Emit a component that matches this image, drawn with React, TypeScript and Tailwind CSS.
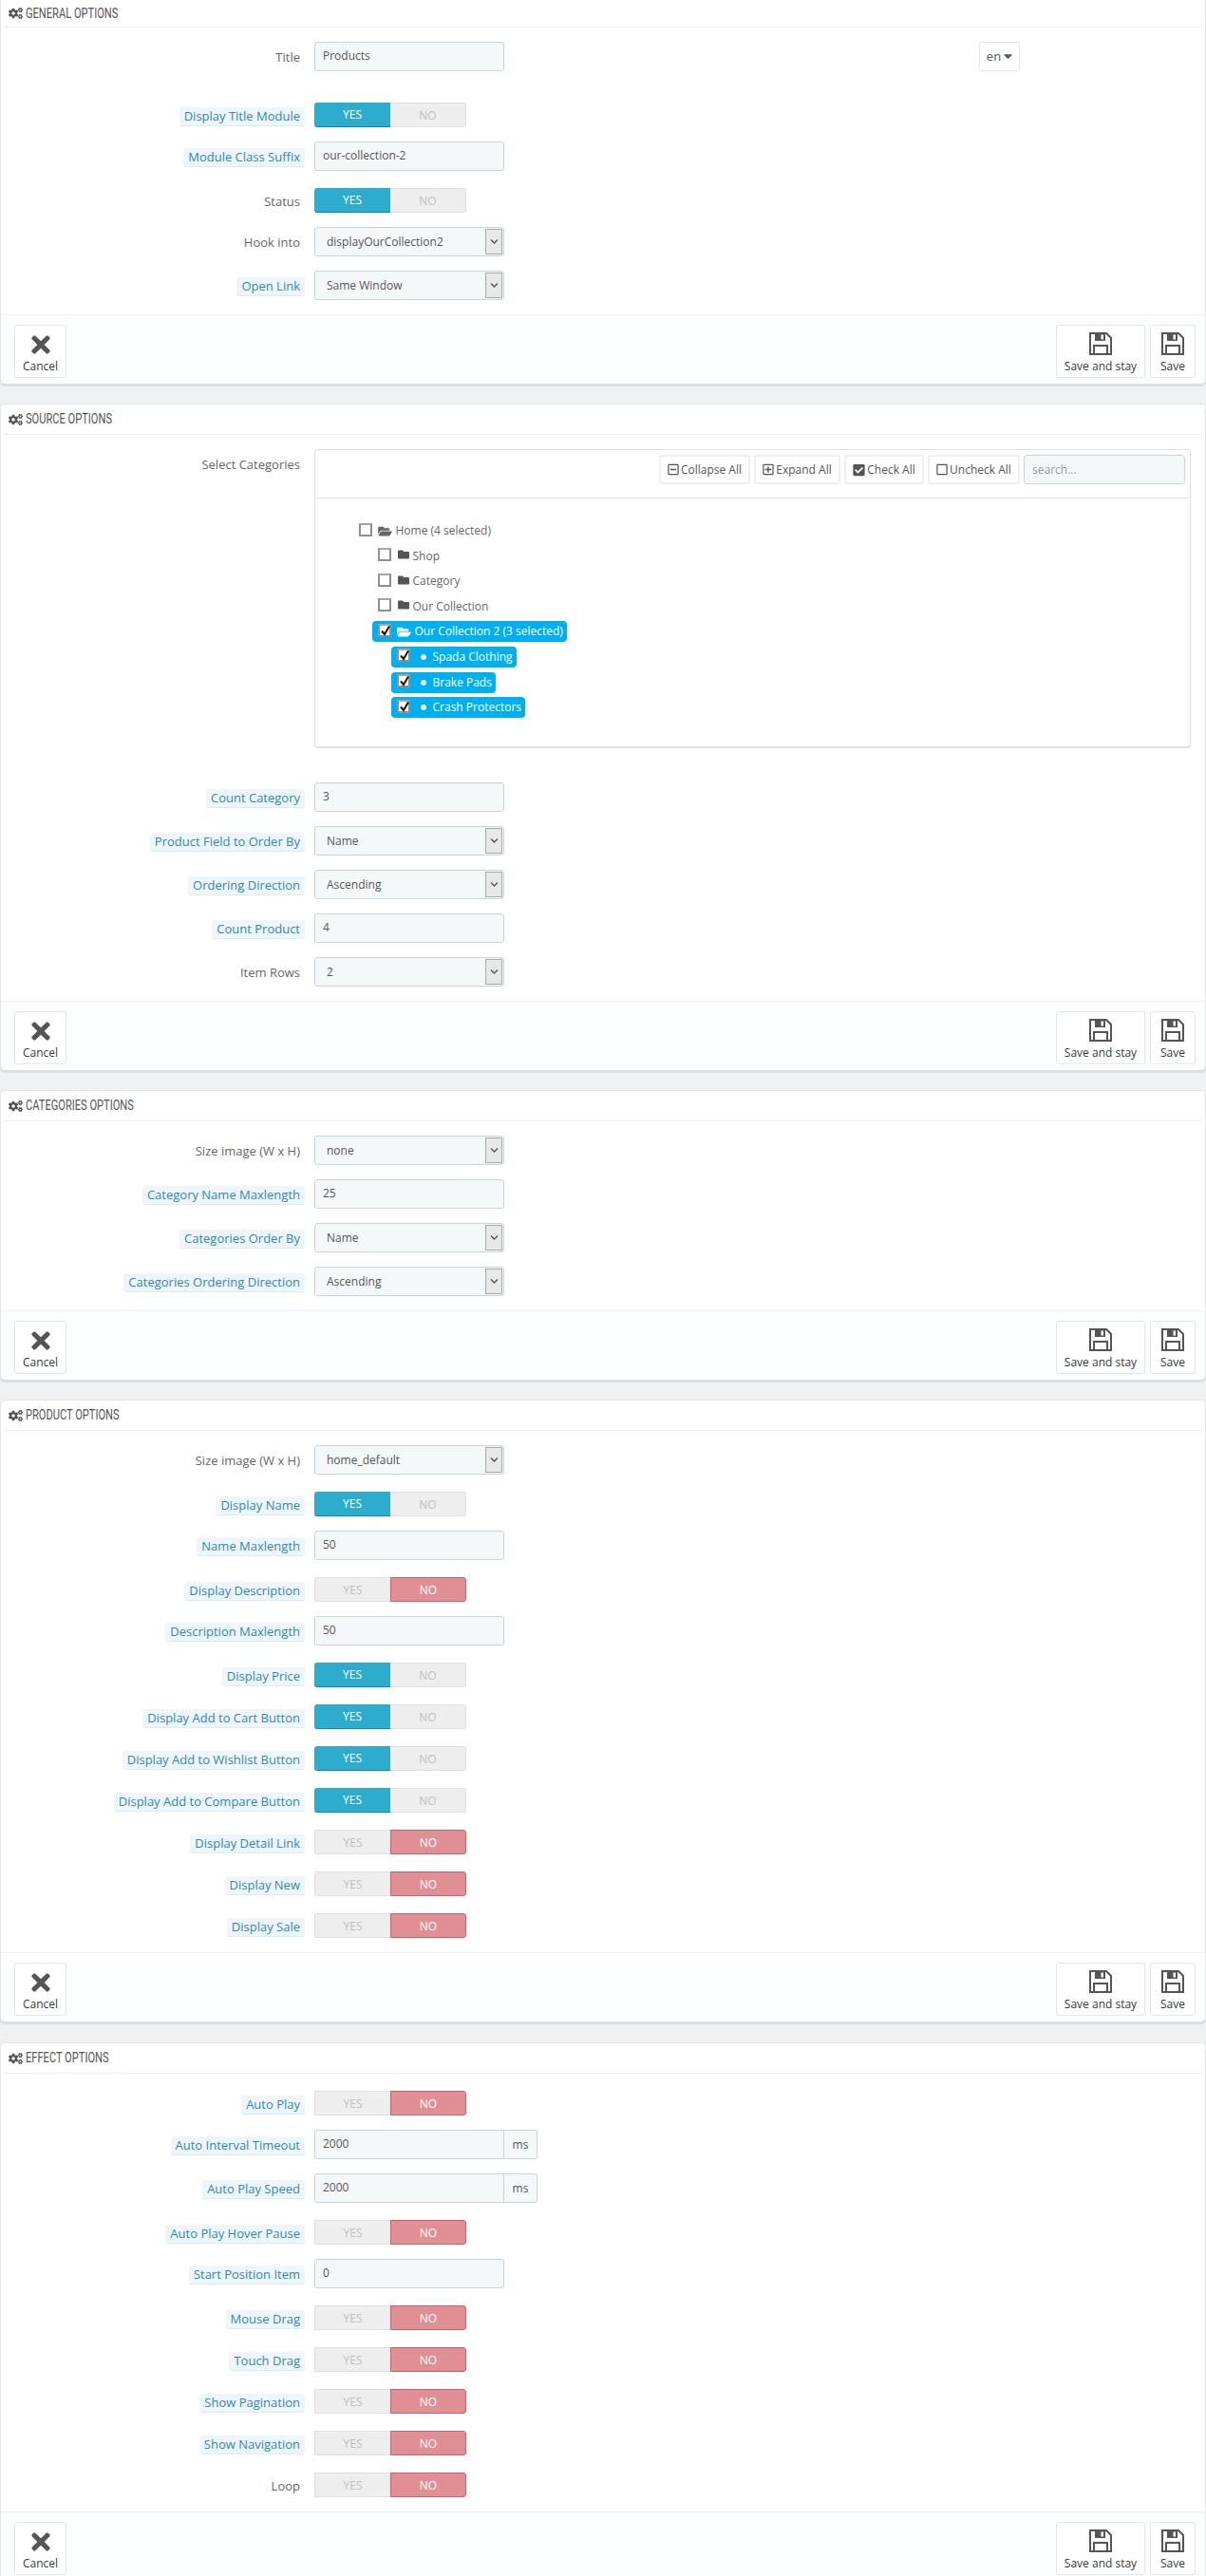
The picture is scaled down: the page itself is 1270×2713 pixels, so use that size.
import { FaCaretDown, FaCheckSquare, FaChevronDown, FaCircle, FaCogs, FaFolder, FaFolderOpen, FaRegMinusSquare, FaRegPlusSquare, FaRegSquare, FaTimes } from 'react-icons/fa'

type Field =
  | { kind: 'input'; label: string; help?: boolean; value: string; addon?: string }
  | { kind: 'select'; label: string; help?: boolean; value: string }
  | { kind: 'switch'; label: string; help?: boolean; on: boolean }

function Label({ text, help }: { text: string; help?: boolean }) {
  if (help) {
    return (
      <span className="inline-block rounded-[3px] bg-[#edf7fb] border-b border-[#dcecf3] px-[5px] h-5 leading-[19px] text-[13px] text-[#3586ae] whitespace-nowrap">
        {text}
      </span>
    )
  }
  return <span className="inline-block px-[5px] h-5 leading-[19px] text-[13px] text-[#666] whitespace-nowrap">{text}</span>
}

function TextBox({ value, addon }: { value: string; addon?: string }) {
  return (
    <div className="flex h-[31px]">
      <div
        className={`w-[200px] h-[31px] bg-[#f5f8f9] border border-[#c7d6db] pl-2 leading-[27px] text-[#555] ${
          addon ? 'rounded-l-[3px]' : 'rounded-[3px]'
        }`}
      >
        {value}
      </div>
      {addon && (
        <div className="w-[35px] h-[31px] bg-[#f5f8f9] border border-l-0 border-[#c7d6db] rounded-r-[3px] text-center leading-[30px] text-[#555]">
          {addon}
        </div>
      )}
    </div>
  )
}

function SelectBox({ value }: { value: string }) {
  return (
    <div className="relative w-[200px] h-[31px] bg-[#f5f8f9] border border-[#c7d6db] rounded-[3px] pl-3 leading-[30px] text-[#555]">
      {value}
      <div className="absolute right-[1px] top-[1px] w-[18px] h-[27px] bg-[#e8e8e8] border border-[#a9a9a9] flex items-center justify-center">
        <FaChevronDown className="w-[9px] h-[9px] text-[#555]" />
      </div>
    </div>
  )
}

function Switch({ on }: { on: boolean }) {
  return (
    <div className="flex w-[160px] h-[26px] mt-[3px] text-center leading-[25px]">
      {on ? (
        <>
          <div className="w-[80px] bg-[#2eacce] border-b border-[#008abd] rounded-l-[3px] text-white">YES</div>
          <div className="w-[80px] bg-[#eeeeee] border-y border-r border-[#e0e0e0] rounded-r-[2px] text-[#c0c0c0]">NO</div>
        </>
      ) : (
        <>
          <div className="w-[80px] bg-[#eeeeee] border-y border-l border-[#e0e0e0] rounded-l-[2px] text-[#c0c0c0]">YES</div>
          <div className="w-[80px] bg-[#e08f95] border border-[#c7616a] rounded-r-[3px] text-white">NO</div>
        </>
      )}
    </div>
  )
}

function Row({ field }: { field: Field }) {
  const isSwitch = field.kind === 'switch'
  return (
    <div className="flex items-start mb-[15px]">
      <div className={`w-[320px] shrink-0 text-right ${isSwitch ? 'pt-[8px]' : 'pt-[7px]'}`}>
        <Label text={field.label} help={field.help} />
      </div>
      <div className="ml-[10px]">
        {field.kind === 'input' && <TextBox value={field.value} addon={field.addon} />}
        {field.kind === 'select' && <SelectBox value={field.value} />}
        {field.kind === 'switch' && <Switch on={field.on} />}
      </div>
    </div>
  )
}

// floppy disk, drawn because the icon packages only have a rounder one
function SaveIcon() {
  return (
    <svg viewBox="0 0 24 24" className="w-[24px] h-[24px] mb-[3px]">
      <path d="M1 1 H18 L23 6 V23 H1 Z" fill="none" stroke="#555" strokeWidth="2" />
      <path d="M6 1 H17 V9 H6 Z" fill="#555" />
      <rect x="12.5" y="2.5" width="2.5" height="5" fill="#fff" />
      <path d="M5 23 V14 H19 V23" fill="none" stroke="#555" strokeWidth="2" />
    </svg>
  )
}

function ActionButton({ icon, text, className }: { icon: React.ReactNode; text: string; className: string }) {
  return (
    <div className={`h-[56px] bg-white border border-[#e3e5e8] rounded-[3px] flex flex-col items-center text-[#363a41] ${className}`}>
      <div className="h-[34px] flex items-end justify-center text-[#555]">{icon}</div>
      <span className="leading-[18px] whitespace-nowrap">{text}</span>
    </div>
  )
}

function Footer() {
  return (
    <div className="flex justify-between h-[73px] bg-[#fcfdfe] border-t border-[#eff1f2] pt-[10px] pl-[14px] pr-[10px] rounded-b-[5px]">
      <ActionButton text="Cancel" className="w-[55px]" icon={<FaTimes className="w-[24px] h-[28px]" />} />
      <div className="flex gap-[5px]">
        <ActionButton text="Save and stay" className="w-[94px]" icon={<SaveIcon />} />
        <ActionButton text="Save" className="w-[48px]" icon={<SaveIcon />} />
      </div>
    </div>
  )
}

function Panel({ title, children, first, className }: { title: string; children: React.ReactNode; first?: boolean; className?: string }) {
  return (
    <section className={`bg-white border border-b-0 border-[#e6e6e6] rounded-[5px] shadow-[0_3px_0_rgba(0,0,0,0.08)] ${first ? 'rounded-t-none border-t-0' : className ?? 'mt-[21px]'}`}>
      <div className={`mx-[3px] pl-[5px] border-b border-[#eeeeee] flex items-center gap-[3px] text-[#555] ${first ? 'h-[29px]' : 'h-[32px]'}`}>
        <FaCogs className="w-[15px] h-[14px] text-[#555]" />
        <span className="inline-block origin-left scale-x-[0.74] font-['Roboto',sans-serif] text-[15px] uppercase whitespace-nowrap">{title}</span>
      </div>
      <div className="pt-[15px]">{children}</div>
      <Footer />
    </section>
  )
}

function Fields({ items }: { items: Field[] }) {
  return (
    <>
      {items.map((f, i) => (
        <Row key={i} field={f} />
      ))}
    </>
  )
}

function Box({ checked }: { checked?: boolean }) {
  return (
    <span className="relative shrink-0 w-[14px] h-[14px] bg-white border-2 border-[#8f8f8f] border-t-[#a5a5a5] flex items-center justify-center">
      {checked && (
        <svg viewBox="0 0 12 12" className="absolute left-0 top-[-1px] w-[12px] h-[12px]">
          <path d="M2 6.5 L5 10 L10 1.5" fill="none" stroke="#111" strokeWidth="2" />
        </svg>
      )}
    </span>
  )
}

function TreeRow({ text, indent, icon, selected }: { text: string; indent: string; icon: React.ReactNode; selected?: boolean }) {
  return (
    <div className={`flex ${indent} h-[22px] mb-[4.6px]`}>
      <div className={`flex items-center h-[22px] rounded-[4px] pl-[6px] pr-[4px] ${selected ? 'bg-[#00aff0] text-white' : 'text-[#666]'}`}>
        <span className="-mt-[3px]"><Box checked={selected} /></span>
        {icon}
        <span className="whitespace-nowrap">{text}</span>
      </div>
    </div>
  )
}

function TreeTool({ icon, text, className }: { icon: React.ReactNode; text: string; className: string }) {
  return (
    <div className={`h-[31px] bg-white border-2 border-[#eef0f1] rounded-[3px] flex items-center justify-center gap-[2px] text-[#555] whitespace-nowrap ${className}`}>
      {icon}
      {text}
    </div>
  )
}

function CategoryTree() {
  const openIcon = <FaFolderOpen className="w-[15px] h-[13px] ml-[6px] mr-[4px]" />
  const closedIcon = <FaFolder className="w-[14px] h-[12px] ml-[6px] mr-[3px] text-[#555] -mt-[3px]" />
  const dot = <FaCircle className="w-[6px] h-[6px] ml-[11px] mr-[7px]" />
  return (
    <div className="flex items-start mb-[36px]">
      <div className="w-[320px] shrink-0 text-right pt-[7px]">
        <Label text="Select Categories" />
      </div>
      <div className="ml-[10px] w-[923px] h-[315px] border border-[#dfe1e3] border-b-2 rounded-[4px]">
        <div className="h-[51px] border-b border-[#e6e6e6] flex items-start justify-end pt-[5px] pr-[5px] gap-[4px]">
          <TreeTool className="w-[96px]" text="Collapse All" icon={<FaRegMinusSquare className="w-[12px] h-[13px]" />} />
          <TreeTool className="w-[91px]" text="Expand All" icon={<FaRegPlusSquare className="w-[12px] h-[13px]" />} />
          <TreeTool className="w-[84px]" text="Check All" icon={<FaCheckSquare className="w-[13px] h-[14px]" />} />
          <TreeTool className="w-[97px]" text="Uncheck All" icon={<FaRegSquare className="w-[12px] h-[13px]" />} />
          <div className="w-[170px] h-[31px] bg-[#f5f8f9] border border-[#c7d6db] rounded-[3px] pl-2 leading-[30px] text-[#999]">search...</div>
        </div>
        <div className="pt-[23px] pl-[19.5px]">
          <TreeRow indent="ml-[20px]" text="Home (4 selected)" icon={openIcon} />
          <TreeRow indent="ml-[40px]" text="Shop" icon={closedIcon} />
          <TreeRow indent="ml-[40px]" text="Category" icon={closedIcon} />
          <TreeRow indent="ml-[40px]" text="Our Collection" icon={closedIcon} />
          <TreeRow indent="ml-[40px]" text="Our Collection 2 (3 selected)" icon={openIcon} selected />
          <TreeRow indent="ml-[60px]" text="Spada Clothing" icon={dot} selected />
          <TreeRow indent="ml-[60px]" text="Brake Pads" icon={dot} selected />
          <TreeRow indent="ml-[60px]" text="Crash Protectors" icon={dot} selected />
        </div>
      </div>
    </div>
  )
}

export default function App() {
  return (
    <div className="h-[2713px] overflow-hidden bg-[#eff1f2] font-['Open_Sans',sans-serif] text-[12px]">
      <Panel title="General Options" first>
        <div className="relative">
          <Row field={{ kind: 'input', label: 'Title', value: 'Products' }} />
          <div className="absolute left-[1030px] top-0 h-[31px] w-[43px] bg-white border border-[#e3e5e8] rounded-[3px] flex items-center justify-center gap-[3px] text-[13px] text-[#555]">
            en <FaCaretDown className="w-[9px] h-[14px] -mt-[2px]" />
          </div>
        </div>
        <div className="h-[15px]" />
        <Fields
          items={[
            { kind: 'switch', label: 'Display Title Module', help: true, on: true },
            { kind: 'input', label: 'Module Class Suffix', help: true, value: 'our-collection-2' },
            { kind: 'switch', label: 'Status', on: true },
            { kind: 'select', label: 'Hook into', value: 'displayOurCollection2' },
            { kind: 'select', label: 'Open Link', help: true, value: 'Same Window' },
          ]}
        />
      </Panel>

      <Panel title="Source Options">
        <CategoryTree />
        <Fields
          items={[
            { kind: 'input', label: 'Count Category', help: true, value: '3' },
            { kind: 'select', label: 'Product Field to Order By', help: true, value: 'Name' },
            { kind: 'select', label: 'Ordering Direction', help: true, value: 'Ascending' },
            { kind: 'input', label: 'Count Product', help: true, value: '4' },
            { kind: 'select', label: 'Item Rows', value: '2' },
          ]}
        />
      </Panel>

      <Panel title="Categories Options">
        <Fields
          items={[
            { kind: 'select', label: 'Size image (W x H)', value: 'none' },
            { kind: 'input', label: 'Category Name Maxlength', help: true, value: '25' },
            { kind: 'select', label: 'Categories Order By', help: true, value: 'Name' },
            { kind: 'select', label: 'Categories Ordering Direction', help: true, value: 'Ascending' },
          ]}
        />
      </Panel>

      <Panel title="Product Options">
        <Fields
          items={[
            { kind: 'select', label: 'Size image (W x H)', value: 'home_default' },
            { kind: 'switch', label: 'Display Name', help: true, on: true },
            { kind: 'input', label: 'Name Maxlength', help: true, value: '50' },
            { kind: 'switch', label: 'Display Description', help: true, on: false },
            { kind: 'input', label: 'Description Maxlength', help: true, value: '50' },
            { kind: 'switch', label: 'Display Price', help: true, on: true },
            { kind: 'switch', label: 'Display Add to Cart Button', help: true, on: true },
            { kind: 'switch', label: 'Display Add to Wishlist Button', help: true, on: true },
            { kind: 'switch', label: 'Display Add to Compare Button', help: true, on: true },
            { kind: 'switch', label: 'Display Detail Link', help: true, on: false },
            { kind: 'switch', label: 'Display New', help: true, on: false },
            { kind: 'switch', label: 'Display Sale', help: true, on: false },
          ]}
        />
      </Panel>

      <Panel title="Effect Options" className="mt-[22px]">
        <Fields
          items={[
            { kind: 'switch', label: 'Auto Play', help: true, on: false },
            { kind: 'input', label: 'Auto Interval Timeout', help: true, value: '2000', addon: 'ms' },
            { kind: 'input', label: 'Auto Play Speed', help: true, value: '2000', addon: 'ms' },
            { kind: 'switch', label: 'Auto Play Hover Pause', help: true, on: false },
            { kind: 'input', label: 'Start Position Item', help: true, value: '0' },
            { kind: 'switch', label: 'Mouse Drag', help: true, on: false },
            { kind: 'switch', label: 'Touch Drag', help: true, on: false },
            { kind: 'switch', label: 'Show Pagination', help: true, on: false },
            { kind: 'switch', label: 'Show Navigation', help: true, on: false },
            { kind: 'switch', label: 'Loop', on: false },
          ]}
        />
      </Panel>
    </div>
  )
}
